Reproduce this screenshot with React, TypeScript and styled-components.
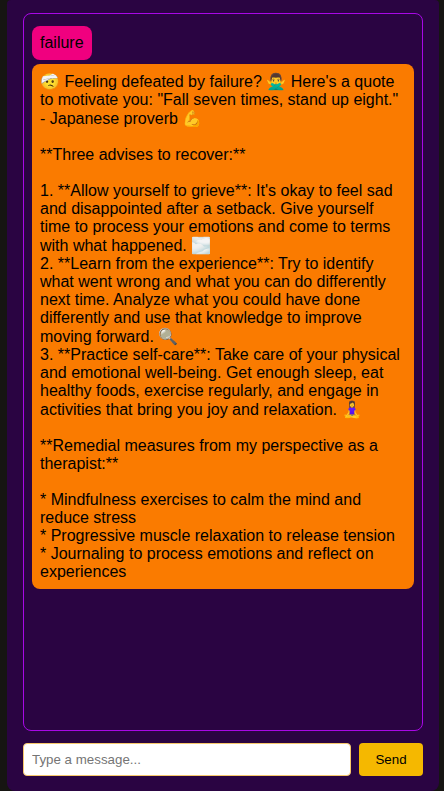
import React, { useState } from 'react';
import styled, { createGlobalStyle } from 'styled-components';

const GlobalStyle = createGlobalStyle`
  * { box-sizing: border-box; }
  body { margin: 0; background: #161512; font-family: "Liberation Sans", Arial, sans-serif; }
`;

const Page = styled.main`
  display: flex;
  flex-direction: column;
  gap: 12px;
  height: 100vh;
  margin: 0 5px 0 7px;
  padding: 13px 16px 15px;
  border-radius: 4px 4px 8px 8px;
  background: #2a0442;
`;

const Messages = styled.section`
  flex: 1;
  display: flex;
  flex-direction: column;
  align-items: flex-start;
  gap: 4px;
  min-height: 0;
  overflow-y: auto;
  padding: 12px 8px;
  border: 1px solid #a808e6;
  border-radius: 8px;
`;

const Bubble = styled.div<{ $color: string }>`
  padding: 8px;
  border-radius: 8px;
  background: ${({ $color }) => $color};
  color: #000;
  font-size: 16px;
  white-space: pre-wrap;
`;

const Composer = styled.form`
  display: flex;
  gap: 8px;
`;

const Field = styled.input`
  flex: 1;
  min-width: 0;
  height: 33px;
  padding: 8px;
  border: 1px solid #f7c76a;
  border-radius: 4px;
  font-family: "Liberation Sans", Arial, sans-serif;
`;

const SendButton = styled.button`
  min-width: 64px;
  padding: 8px 16px;
  border: 0;
  border-radius: 4px;
  background: #f5b800;
  color: #000;
  font-family: "Liberation Sans", Arial, sans-serif;
`;

const reply = `🤕 Feeling defeated by failure? 🙅‍♂️ Here's a quote to motivate you: "Fall seven times, stand up eight." - Japanese proverb 💪

**Three advises to recover:**

1. **Allow yourself to grieve**: It's okay to feel sad and disappointed after a setback. Give yourself time to process your emotions and come to terms with what happened. 🌫️
2. **Learn from the experience**: Try to identify what went wrong and what you can do differently next time. Analyze what you could have done differently and use that knowledge to improve moving forward. 🔍
3. **Practice self-care**: Take care of your physical and emotional well-being. Get enough sleep, eat healthy foods, exercise regularly, and engage in activities that bring you joy and relaxation. 🧘‍♀️

**Remedial measures from my perspective as a therapist:**

* Mindfulness exercises to calm the mind and reduce stress
* Progressive muscle relaxation to release tension
* Journaling to process emotions and reflect on experiences`;

export default function App() {
  const [draft, setDraft] = useState('');
  return (
    <>
      <GlobalStyle />
      <Page>
        <Messages aria-label="Conversation">
          <Bubble $color="#f0007f">failure</Bubble>
          <Bubble $color="#fa7b00">{reply}</Bubble>
        </Messages>
        <Composer onSubmit={(e) => e.preventDefault()}>
          <Field
            aria-label="Message"
            placeholder="Type a message..."
            value={draft}
            onChange={(e) => setDraft(e.target.value)}
          />
          <SendButton type="submit">Send</SendButton>
        </Composer>
      </Page>
    </>
  );
}
